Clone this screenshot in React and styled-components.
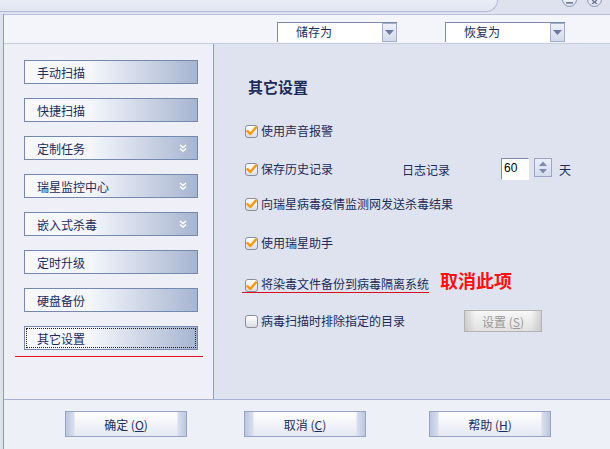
import React from 'react'
import styled, { createGlobalStyle } from 'styled-components'

const GlobalStyle = createGlobalStyle`
    body {
        margin: 0;
        background: #dde2ee;
        font-family: "Noto Sans CJK SC", "Liberation Sans", sans-serif;
        font-size: 12px;
        color: #1b2b5a;
    }
`

const Window = styled.div`
    width: 610px;
    height: 449px;
    overflow: hidden;
    background: #dde2ee;
    display: flex;
    flex-direction: column;
`

const TitleStrip = styled.div`
    height: 14px;
    display: flex;
    align-items: flex-start;
    flex-shrink: 0;
`

const Tab = styled.div`
    width: 498px;
    height: 12px;
    box-sizing: border-box;
    background: linear-gradient(#e9edf6, #e0e5f0);
    border-right: 1px solid #b1bbd5;
    border-bottom: 1px solid #b1bbd5;
    border-bottom-right-radius: 12px;
`

const Controls = styled.div`
    display: flex;
    gap: 10px;
    margin-left: 64px;
`

const CircleBtn = styled.div`
    width: 15px;
    height: 15px;
    margin-top: -8px;
    box-sizing: border-box;
    border-radius: 50%;
    border: 1px solid #8b97b6;
    background: radial-gradient(circle at 50% 30%, #ffffff, #d5dbea);
    display: flex;
    justify-content: center;
    align-items: flex-end;
    padding-bottom: 2px;
`

const Frame = styled.div`
    flex: 1;
    margin-left: 3px;
    border-left: 1px solid #8e9bbb;
    display: flex;
    flex-direction: column;
    min-height: 0;
`

const Toolbar = styled.div`
    height: 29px;
    flex-shrink: 0;
    box-sizing: border-box;
    border-top: 1px solid #b7c1d9;
    background: #f3f5fa;
    display: flex;
    padding: 7px 0 0 273px;
    gap: 48px;
`

const Dropdown = styled.div`
    width: 120px;
    height: 20px;
    box-sizing: border-box;
    border-top: 1px solid #7d89a8;
    border-left: 1px solid #7d89a8;
    background: #ffffff;
    display: flex;
`

const DropText = styled.div`
    flex: 1;
    padding-left: 18px;
    line-height: 18px;
    color: #1b2b5a;
`

const DropArrow = styled.div`
    width: 15px;
    height: 19px;
    box-sizing: border-box;
    border: 1px solid #a3aecb;
    background: linear-gradient(#eef1f8, #d3daeb);
    display: flex;
    align-items: center;
    justify-content: center;
`

const Main = styled.div`
    height: 356px;
    flex-shrink: 0;
    display: flex;
    border-top: 1px solid #c6cde0;
    box-sizing: border-box;
`

const LeftPanel = styled.div`
    width: 210px;
    box-sizing: border-box;
    border-right: 1px solid #8f9cbc;
    background: #eff0f7;
    padding: 16px 0 0 20px;
`

const NavList = styled.div`
    display: flex;
    flex-direction: column;
    gap: 14px;
`

const NavButton = styled.div`
    width: 174px;
    height: 24px;
    box-sizing: border-box;
    border: 1px solid #7489ad;
    background: linear-gradient(to right, #f8f9fd 0%, #f4f6fb 38%, #a7b5d1 100%);
    display: flex;
    align-items: center;
    justify-content: space-between;
    padding: 0 10px 0 12px;
    color: #1b2b5a;
    outline: ${p => (p.$focused ? '1px dotted #202020' : 'none')};
    outline-offset: -3px;
`

const RedLine = styled.div`
    width: 188px;
    height: 1px;
    margin: 6px 0 0 -9px;
    background: #e0141c;
`

const RightPanel = styled.div`
    flex: 1;
    background: #dfe3ef;
    padding: 33px 0 0 31px;
`

const Title = styled.div`
    height: 20px;
    line-height: 20px;
    margin-left: 3px;
    font-size: 15px;
    font-weight: bold;
    color: #1b2b5a;
`

const Row = styled.div`
    height: 24px;
    margin-top: ${p => p.$gap}px;
    display: flex;
    align-items: center;
`

const Option = styled.div`
    display: flex;
    align-items: center;
    height: 24px;
    box-sizing: border-box;
    ${p => p.$marked && `
        border-bottom: 1px solid #d8101c;
        height: 19px;
        margin-top: 5px;
        align-items: flex-end;
        padding: 0 0 0 3px;
        margin-left: -3px;
    `}
`

const Box = styled.div`
    width: 13px;
    height: 13px;
    box-sizing: border-box;
    border: 1px solid #8a8f9c;
    border-radius: 3px;
    background: linear-gradient(#ffffff, #dcdde2);
    display: flex;
    align-items: center;
    justify-content: center;
    flex-shrink: 0;
`

const Label = styled.span`
    margin-left: 3px;
    line-height: 16px;
    white-space: nowrap;
`

const Caption = styled.span`
    margin-left: ${p => p.$ml}px;
    white-space: nowrap;
`

const Warn = styled.span`
    margin-left: 11px;
    margin-bottom: 3px;
    font-size: 18px;
    font-weight: bold;
    color: #ff1010;
    white-space: nowrap;
    line-height: 20px;
`

const NumInput = styled.div`
    width: 28px;
    height: 22px;
    margin-left: 51px;
    box-sizing: border-box;
    border-top: 1px solid #7d89a8;
    border-left: 1px solid #7d89a8;
    border-right: 1px solid #ffffff;
    border-bottom: 1px solid #ffffff;
    background: #ffffff;
    font-family: "Liberation Sans", sans-serif;
    font-size: 12px;
    color: #000;
    padding-left: 2px;
    line-height: 18px;
    align-self: flex-start;
    margin-top: 1px;
`

const Spinner = styled.div`
    width: 18px;
    height: 19px;
    margin-left: 5px;
    box-sizing: border-box;
    border: 1px solid #9aa6c4;
    background: linear-gradient(#eaeef7, #d4dbeb);
    display: flex;
    align-items: center;
    justify-content: center;
    align-self: flex-start;
    margin-top: 1px;
`

const GrayButton = styled.div`
    width: 78px;
    height: 22px;
    margin-left: 59px;
    box-sizing: border-box;
    border: 1px solid #b3b3b3;
    background:
        linear-gradient(to right, rgba(180,180,180,0.55), rgba(255,255,255,0) 10px, rgba(255,255,255,0) calc(100% - 10px), rgba(180,180,180,0.55)),
        linear-gradient(#f7f7f7, #e1e1e1);
    color: #9a9a9a;
    display: flex;
    align-items: center;
    justify-content: center;
    font-size: 12px;
    white-space: nowrap;
`

const Footer = styled.div`
    flex: 1;
    box-sizing: border-box;
    border-top: 1px solid #a6b2cf;
    background: #eef0f7;
    display: flex;
    padding: 11px 0 0 61px;
`

const FooterButton = styled.div`
    width: 122px;
    height: 26px;
    margin-left: ${p => p.$ml}px;
    box-sizing: border-box;
    border: 1px solid #97a4c6;
    background:
        linear-gradient(to right, #bcc6df 0px, #d9dfee 8px, rgba(255,255,255,0) 9px, rgba(255,255,255,0) calc(100% - 9px), #d9dfee calc(100% - 8px), #bcc6df 100%),
        linear-gradient(#ffffff, #e4e8f3);
    color: #1b2b5a;
    display: flex;
    align-items: center;
    justify-content: center;
    white-space: nowrap;
`

const Check = () => (
    <svg width="11" height="10" viewBox="0 0 11 10">
        <path d="M1.5 5.2 L4.3 8 L9.8 1.6" fill="none" stroke="#f29a12" strokeWidth="2.4" strokeLinecap="round" strokeLinejoin="round" />
    </svg>
)

const Chevrons = () => (
    <svg width="8" height="8" viewBox="0 0 8 8">
        <polyline points="1,1 4,3.5 7,1" fill="none" stroke="#ffffff" strokeWidth="1.6" />
        <polyline points="1,4.5 4,7 7,4.5" fill="none" stroke="#ffffff" strokeWidth="1.6" />
    </svg>
)

const DownTri = () => (
    <svg width="9" height="5" viewBox="0 0 9 5">
        <polygon points="0,0 9,0 4.5,5" fill="#6b7aa3" />
    </svg>
)

const SpinArrows = () => (
    <svg width="10" height="15" viewBox="0 0 10 15">
        <polygon points="1,6 9,6 5,1.5" fill="#7b8ab0" />
        <polygon points="1,9 9,9 5,13.5" fill="#7b8ab0" />
    </svg>
)

const navItems = [
    { text: '手动扫描' },
    { text: '快捷扫描' },
    { text: '定制任务', more: true },
    { text: '瑞星监控中心', more: true },
    { text: '嵌入式杀毒', more: true },
    { text: '定时升级' },
    { text: '硬盘备份' },
    { text: '其它设置', focused: true },
]

const CheckBox = ({ checked, children }) => (
    <>
        <Box>{checked && <Check />}</Box>
        <Label>{children}</Label>
    </>
)

export default function App() {
    return (
        <Window>
            <GlobalStyle />
            <TitleStrip>
                <Tab />
                <Controls>
                    <CircleBtn>
                        <svg width="7" height="2" viewBox="0 0 7 2"><rect width="7" height="1.6" fill="#6d7896" /></svg>
                    </CircleBtn>
                    <CircleBtn>
                        <svg width="7" height="4" viewBox="0 0 7 4"><path d="M1 0 L6 4 M6 0 L1 4" stroke="#6d7896" strokeWidth="1.4" /></svg>
                    </CircleBtn>
                </Controls>
            </TitleStrip>
            <Frame>
                <Toolbar>
                    <Dropdown>
                        <DropText>储存为</DropText>
                        <DropArrow><DownTri /></DropArrow>
                    </Dropdown>
                    <Dropdown>
                        <DropText>恢复为</DropText>
                        <DropArrow><DownTri /></DropArrow>
                    </Dropdown>
                </Toolbar>
                <Main>
                    <LeftPanel>
                        <NavList>
                            {navItems.map(item => (
                                <NavButton key={item.text} $focused={item.focused}>
                                    <span>{item.text}</span>
                                    {item.more && <Chevrons />}
                                </NavButton>
                            ))}
                        </NavList>
                        <RedLine />
                    </LeftPanel>
                    <RightPanel>
                        <Title>其它设置</Title>
                        <Row $gap={22}>
                            <Option><CheckBox checked>使用声音报警</CheckBox></Option>
                        </Row>
                        <Row $gap={14}>
                            <Option><CheckBox checked>保存历史记录</CheckBox></Option>
                            <Caption $ml={69}>日志记录</Caption>
                            <NumInput>60</NumInput>
                            <Spinner><SpinArrows /></Spinner>
                            <Caption $ml={7}>天</Caption>
                        </Row>
                        <Row $gap={11}>
                            <Option><CheckBox checked>向瑞星病毒疫情监测网发送杀毒结果</CheckBox></Option>
                        </Row>
                        <Row $gap={15}>
                            <Option><CheckBox checked>使用瑞星助手</CheckBox></Option>
                        </Row>
                        <Row $gap={14}>
                            <Option $marked><CheckBox checked>将染毒文件备份到病毒隔离系统</CheckBox></Option>
                            <Warn>取消此项</Warn>
                        </Row>
                        <Row $gap={16}>
                            <Option><CheckBox>病毒扫描时排除指定的目录</CheckBox></Option>
                            <GrayButton>设置 (<u>S</u>)</GrayButton>
                        </Row>
                    </RightPanel>
                </Main>
                <Footer>
                    <FooterButton $ml={0}>确定 (<u>O</u>)</FooterButton>
                    <FooterButton $ml={57}>取消 (<u>C</u>)</FooterButton>
                    <FooterButton $ml={63}>帮助 (<u>H</u>)</FooterButton>
                </Footer>
            </Frame>
        </Window>
    )
}
